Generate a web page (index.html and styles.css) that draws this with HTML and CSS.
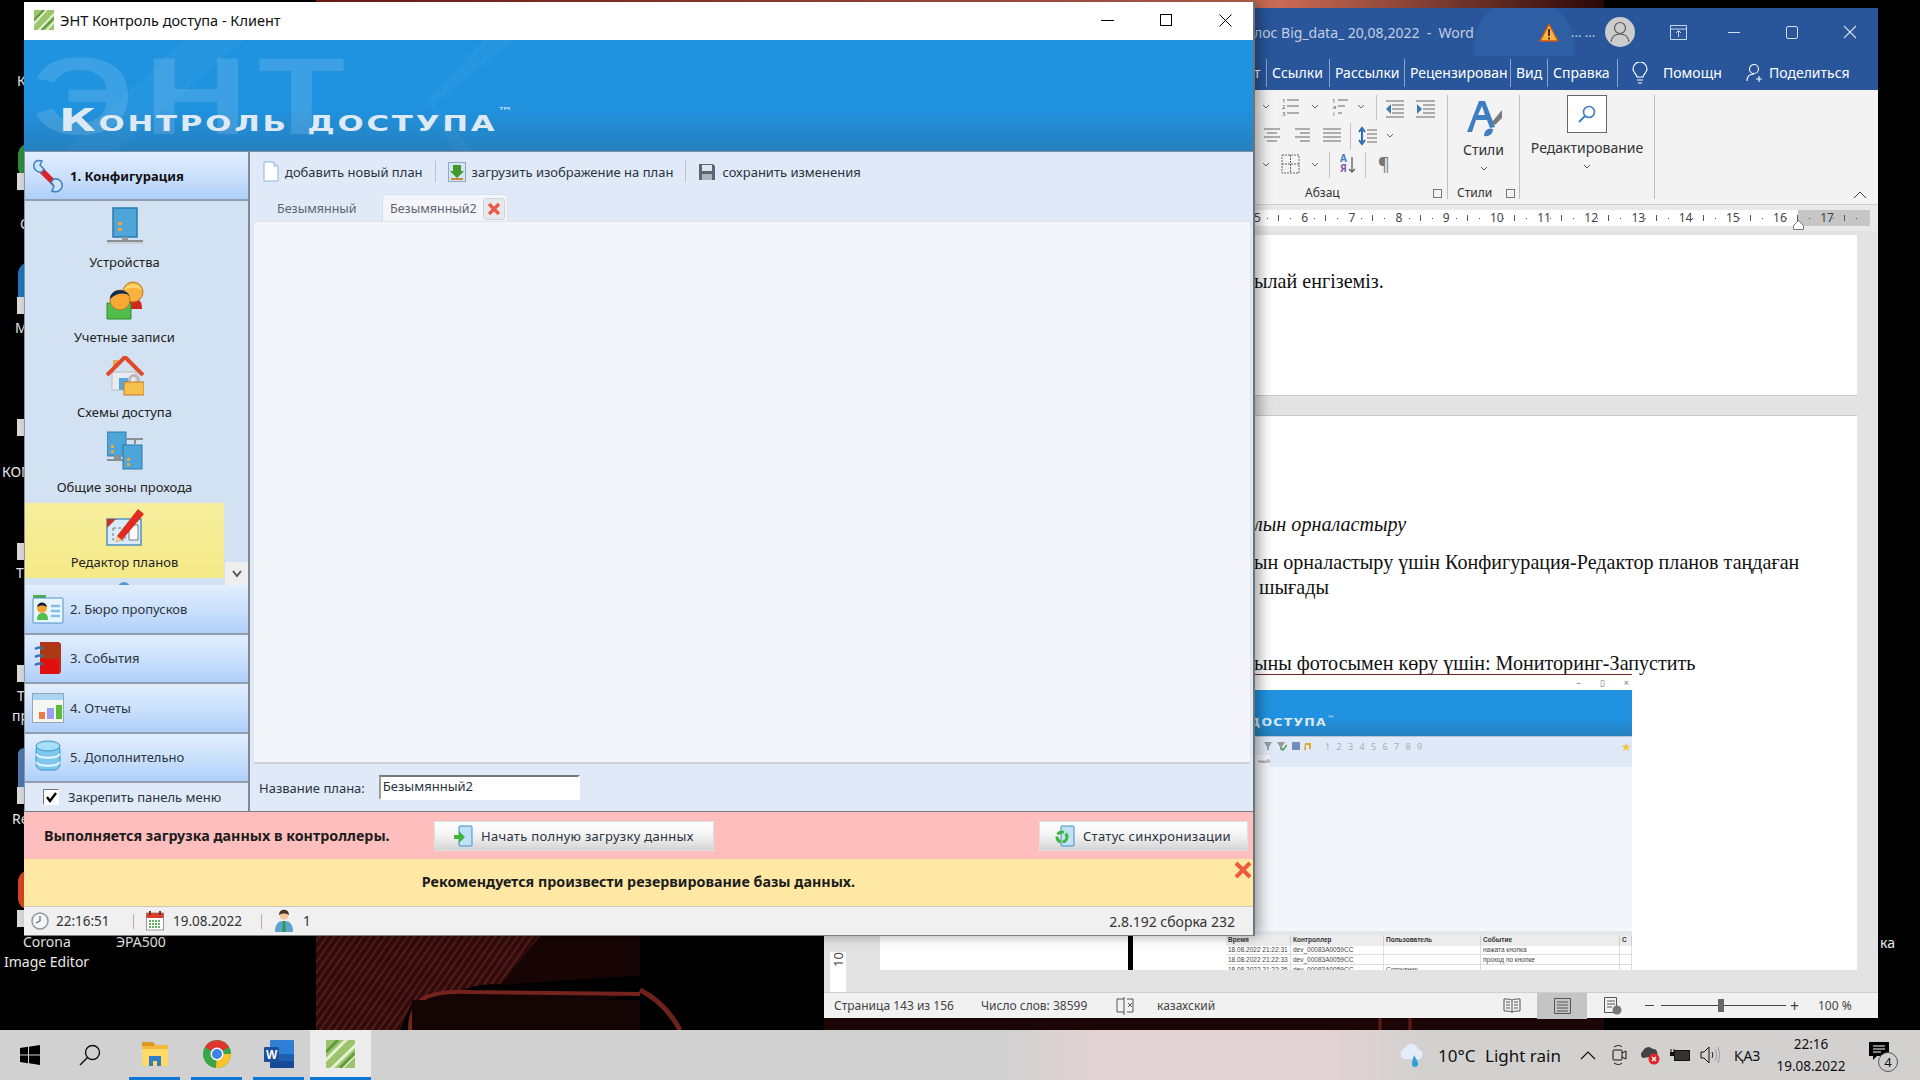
FILE: index.html
```html
<!DOCTYPE html>
<html lang="ru">
<head>
    <meta charset="UTF-8">
    <title>ЭНТ Контроль доступа - Клиент</title>
    <link rel="stylesheet" href="styles.css">
</head>
<body>
<div class="desktop">
    <!-- wallpaper -->
    <svg class="wallpaper" width="1920" height="1030" viewBox="0 0 1920 1030">
        <defs>
            <pattern id="hatch" width="6" height="6" patternUnits="userSpaceOnUse" patternTransform="rotate(35)">
                <rect width="6" height="6" fill="#2e0c0c"/>
                <rect width="2" height="6" fill="#571a18"/>
            </pattern>
            <linearGradient id="topred" x1="0" x2="1">
                <stop offset="0" stop-color="#7d1f18"/>
                <stop offset=".75" stop-color="#c96a55"/>
                <stop offset="1" stop-color="#2a0808"/>
            </linearGradient>
        </defs>
        <rect width="1920" height="1030" fill="#000"/>
        <rect x="316" y="0" width="1288" height="8" fill="url(#topred)"/>
        <polygon points="316,936 640,936 640,975 480,985 412,1003 400,1030 316,1030" fill="url(#hatch)"/>
        <polygon points="540,936 640,936 640,975 500,985" fill="#170505"/>
        <path d="M410 1030 C410 1000 425 990 470 992 L640 994" fill="#140404" stroke="#74231d" stroke-width="4"/>
        <rect x="412" y="1000" width="228" height="30" fill="#140404"/>
        <path d="M640 990 C660 1000 672 1015 680 1030" fill="none" stroke="#6e221c" stroke-width="5"/>
        <rect x="824" y="1018" width="780" height="12" fill="#1c0505"/>
        <path d="M1380 1018v12M1410 1018v12" stroke="#5e1b17" stroke-width="3"/>
    </svg>

    <!-- desktop icons peeking out from behind the windows -->
    <div class="dlabel" style="left:17px;top:71px">К</div>
    <div class="blob blob-green" style="top:143px;height:36px"></div>
    <div class="shortcut" style="top:173px"></div>
    <div class="dlabel" style="left:20px;top:214px">С</div>
    <div class="blob blob-blue" style="top:262px;height:48px"></div>
    <div class="shortcut" style="top:297px"></div>
    <div class="dlabel" style="left:15px;top:318px">М</div>
    <div class="shortcut" style="top:419px"></div>
    <div class="dlabel" style="left:2px;top:462px">КОМ</div>
    <div class="shortcut" style="top:543px"></div>
    <div class="dlabel" style="left:16px;top:563px">Т</div>
    <div class="shortcut" style="top:665px"></div>
    <div class="dlabel" style="left:17px;top:686px">Т</div>
    <div class="dlabel" style="left:12px;top:706px">пр</div>
    <div class="blob blob-steel" style="top:748px;height:50px"></div>
    <div class="shortcut" style="top:787px"></div>
    <div class="dlabel" style="left:12px;top:809px">Re</div>
    <div class="blob blob-orange" style="top:870px;height:40px"></div>
    <div class="shortcut" style="top:910px"></div>
    <div class="dlabel" style="left:23px;top:932px">Corona</div>
    <div class="dlabel" style="left:4px;top:952px">Image Editor</div>
    <div class="dlabel" style="left:116px;top:932px">ЭРА500</div>
    <div class="dlabel" style="left:1880px;top:933px">ка</div>

    <!-- word window behind -->
    <div class="word">
        <div class="word-title">
            <span class="word-name">лос Big_data_ 20,08,2022&nbsp; -&nbsp; Word</span>
            <svg class="word-warn" width="20" height="19" viewBox="0 0 20 19"><path d="M10 1L19 18H1Z" fill="#f3b63f" stroke="#c8561c" stroke-width="1.4"/><path d="M10 6v7M10 14.5v2" stroke="#5a2a10" stroke-width="2"/></svg>
            <span class="word-dots">... ...</span>
            <span class="word-avatar">
                <svg width="30" height="30" viewBox="0 0 30 30"><circle cx="15" cy="11" r="5.5" fill="none" stroke="#555" stroke-width="1.2"/><path d="M6 25c1-7 5-8 9-8s8 1 9 8" fill="none" stroke="#555" stroke-width="1.2"/></svg>
            </span>
            <svg class="word-ctl" width="17" height="15" viewBox="0 0 17 15"><path d="M.5.5h16v14H.5zM.5 4h16M8.5 12V6M6 8l2.500-2.500L11 8" fill="none" stroke="#c9d6ea"/></svg>
            <span class="word-min"></span>
            <span class="word-max"></span>
            <svg class="word-close" width="14" height="14" viewBox="0 0 14 14"><path d="M1 1l12 12M13 1L1 13" stroke="#d5deee" stroke-width="1.100"/></svg>
        </div>
        <div class="word-tabs">
            <span class="wtab" style="width:12px">т</span>
            <span class="wtab wsep" style="width:63px">Ссылки</span>
            <span class="wtab wsep" style="width:75px">Рассылки</span>
            <span class="wtab wsep wclip" style="width:106px">Рецензирован</span>
            <span class="wtab wsep" style="width:37px">Вид</span>
            <span class="wtab wsep" style="width:70px">Справка</span>
            <span class="wtab wsep wbulb">
                <svg width="16" height="22" viewBox="0 0 16 22"><path d="M5 15c0-3-4-4-4-8a7 7 0 0 1 14 0c0 4-4 5-4 8zM5 18h6M6 21h4" fill="none" stroke="#fff" stroke-width="1.200"/></svg>
            </span>
            <span class="wtab whelp">Помощн</span>
            <svg class="wshare" width="18" height="20" viewBox="0 0 18 20"><circle cx="8" cy="6" r="4.500" fill="none" stroke="#fff" stroke-width="1.100"/><path d="M1 18c0-5 3-7 7-7M13 13v6M10 16h6" fill="none" stroke="#fff" stroke-width="1.100"/></svg>
            <span class="wtab">Поделиться</span>
        </div>
        <div class="ribbon">
            <div class="rgroup rg-para">
                <svg class="para-icons" width="194" height="84" viewBox="0 0 194 84">
                    <g fill="none" stroke="#666">
                        <!-- chevrons -->
                        <path d="M9 8l3 3 3-3M58 8l3 3 3-3M104 8l3 3 3-3M133 37l3 3 3-3M9 66l3 3 3-3M58 66l3 3 3-3"/>
                        <!-- lists -->
                        <path d="M33 3h12M33 9h12M33 16h12M84 3h10M84 9h7M84 16h4"/>
                        <!-- alignment -->
                        <path d="M10 32h16M13 36h10M10 40h16M13 44h10M41 32h15M46 36h10M41 40h15M46 44h10M69 32h18M69 36h18M69 40h18M69 44h18"/>
                        <path d="M113 33h10M113 37h10M113 41h10M113 45h10"/>
                        <!-- borders -->
                        <path d="M28 58h17v18H28zM36.500 58v18M28 67h17" stroke-dasharray="2 1"/>
                    </g>
                    <g stroke="#c4c4c4">
                        <path d="M122.500-2v25M96.500 26v27M75.500 55v26M111.500 55v26"/>
                    </g>
                    <text x="28" y="6" class="list-num">1</text><text x="28" y="12" class="list-num">2</text><text x="28" y="19" class="list-num">3</text>
                    <text x="78" y="6" class="list-num">1</text><text x="79" y="12" class="list-num">a</text><text x="79" y="19" class="list-num">i</text>
                    <path d="M132 4h18M138 8h12M138 12h12M138 16h12M132 20h18" stroke="#666" fill="none"/>
                    <path d="M137 7l-5 5 5 5z" fill="#3d78b8"/>
                    <path d="M162 4h19M169 8h12M169 12h12M169 16h12M162 20h19" stroke="#666" fill="none"/>
                    <path d="M163 7l5 5-5 5z" fill="#3d78b8"/>
                    <path d="M105 35l3-4 3 4M108 31v16M105 43l3 4 3-4" fill="none" stroke="#2f6fb5" stroke-width="2"/>
                    <text x="86" y="65" class="az-a">А</text>
                    <text x="86" y="75" class="az-b">Я</text>
                    <path d="M98 60v15M95 72l3 3 3-3" fill="none" stroke="#666" stroke-width="1.400"/>
                    <text x="124" y="74" class="pilcrow">¶</text>
                </svg>
                <div class="rlabel rlabel-para">Абзац</div>
                <span class="launcher launcher-a"></span>
            </div>
            <div class="rgroup rg-styles">
                <svg class="styles-icon" width="40" height="38" viewBox="0 0 40 38">
                    <path d="M3 32L15 1h6l10 26-5 1-3-8H12l-4 12zM14 15h7l-3-9z" fill="#3f7fc1"/>
                    <path d="M28 22L38 10v8l-7 7z" fill="#7a7a7a"/>
                    <path d="M20 36c0-6 5-9 9-7 0 5-4 8-9 7z" fill="#3f7fc1"/>
                </svg>
                <div class="rbig">Стили</div>
                <svg class="chev" width="8" height="5" viewBox="0 0 8 5"><path d="M1 1l3 3 3-3" fill="none" stroke="#555"/></svg>
                <div class="rlabel">Стили</div>
                <span class="launcher launcher-b"></span>
            </div>
            <div class="rgroup rg-edit">
                <div class="search-box">
                    <svg width="20" height="20" viewBox="0 0 20 20"><circle cx="12" cy="8" r="5.500" fill="none" stroke="#3f7fc1" stroke-width="1.600"/><path d="M8 12l-6 6" stroke="#3f7fc1" stroke-width="2"/></svg>
                </div>
                <div class="rbig">Редактирование</div>
                <svg class="chev" width="8" height="5" viewBox="0 0 8 5"><path d="M1 1l3 3 3-3" fill="none" stroke="#555"/></svg>
            </div>
            <svg class="collapse" width="14" height="8" viewBox="0 0 14 8"><path d="M1 7l6-6 6 6" fill="none" stroke="#444"/></svg>
        </div>
        <div class="ruler-wrap">
            <div class="ruler">
                <span>5</span><span>6</span><span>7</span><span>8</span><span>9</span><span>10</span><span>11</span><span>12</span><span>13</span><span>14</span><span>15</span><span>16</span><span>17</span>
            </div>
            <svg class="ruler-mark" width="11" height="10" viewBox="0 0 11 10"><path d="M5.500.5l5 5v4H.5v-4z" fill="#fff" stroke="#777"/></svg>
        </div>
        <div class="doc">
            <div class="vruler">10</div>
            <div class="page page-one">
                <p class="dl">ылай енгіземіз.</p>
            </div>
            <div class="page page-two">
                <p class="dl dl-it"><i>лын орналастыру</i></p>
                <p class="dl dl-a">ын орналастыру үшін Конфигурация-Редактор планов таңдаған</p>
                <p class="dl dl-b">&nbsp;шығады</p>
                <p class="dl dl-c">ыны фотосымен көру үшін: Мониторинг-Запустить</p>
            </div>
            <!-- screenshot pasted in the document -->
            <div class="shot">
                <div class="shot-title"><span>–</span><span>▯</span><span>×</span></div>
                <div class="shot-banner"><span class="shot-logo">доступа<sup>™</sup></span></div>
                <div class="shot-tools">
                    <svg width="24" height="10" viewBox="0 0 24 10"><path d="M1 1h8L6 6v3H4V6zM14 1h8l-3 5v3h-2V6z" fill="#9a9a9a"/><path d="M18 7l2 2 4-5" fill="none" stroke="#43a047" stroke-width="1.500"/></svg>
                    <svg width="22" height="10" viewBox="0 0 22 10"><rect x="1" y="1" width="8" height="8" fill="#6d8fb8"/><path d="M14 2h6v6h-2V4h-3v5h-2z" fill="#e0a92e"/></svg>
                    <span class="shot-nums">1 2 3 4 5 6 7 8 9</span>
                    <span class="shot-star">★</span>
                </div>
                <div class="shot-tabs"><span>ный</span></div>
                <div class="shot-page"></div>
                <div class="shot-grip"></div>
                <div class="shot-table">
                    <b>Время</b><b>Контроллер</b><b>Пользователь</b><b>Событие</b><b>С</b>
                    <span>18.08.2022 21:22:31</span><span>dev_00083A0059CC</span><span></span><span>нажата кнопка</span><span></span>
                    <span>18.08.2022 21:22:33</span><span>dev_00083A0059CC</span><span></span><span>проход по кнопке</span><span></span>
                    <span>18.08.2022 21:22:35</span><span>dev_00083A0059CC</span><span>Сотрудник</span><span></span><span></span>
                </div>
            </div>
        </div>
        <div class="word-status">
            <span class="ws-a">Страница 143 из 156</span>
            <span class="ws-b">Число слов: 38599</span>
            <svg class="ws-i" width="18" height="18" viewBox="0 0 18 18"><path d="M8 2H1v13h7M8 0v18M11 2h6v13h-6M12 6l4 4M16 6l-4 4" fill="none" stroke="#555"/></svg>
            <span class="ws-c">казахский</span>
            <svg class="ws-read" width="18" height="16" viewBox="0 0 18 16"><path d="M9 2C7 1 4 1 1 1v12c3 0 6 0 8 1 2-1 5-1 8-1V1c-3 0-6 0-8 1zM9 2v13M3 4h4M3 7h4M3 10h4M11 4h4M11 7h4M11 10h4" fill="none" stroke="#555"/></svg>
            <span class="ws-print"><svg width="17" height="16" viewBox="0 0 17 16"><path d="M.5.5h16v15H.5zM3 4h11M3 7h11M3 10h11M3 13h11" fill="none" stroke="#555"/></svg></span>
            <svg class="ws-web" width="18" height="18" viewBox="0 0 18 18"><path d="M.5.5h12v15H.5zM3 4h8M3 7h8M3 10h5" fill="none" stroke="#555"/><circle cx="13" cy="13" r="4.500" fill="#777"/></svg>
            <span class="ws-minus"></span>
            <span class="ws-slider"><i></i></span>
            <span class="ws-plus">+</span>
            <span class="ws-zoom">100 %</span>
        </div>
    </div>

    <!-- access control client -->
    <div class="app">
        <div class="app-title">
            <svg width="20" height="20" viewBox="0 0 20 20"><rect width="20" height="20" fill="#9cc46c"/><path d="M-2 16L14-2M3 22L22 2M9 24L24 8" stroke="#e6f0d4" stroke-width="2"/><path d="M0 10L10 0M8 20L20 8" stroke="#5f9a3c" stroke-width="2"/></svg>
            <span class="app-name">ЭНТ Контроль доступа - Клиент</span>
            <span class="btn-min"></span>
            <span class="btn-max"></span>
            <svg class="btn-close" width="13" height="13" viewBox="0 0 13 13"><path d="M.5.5l12 12M12.500.5l-12 12" stroke="#000"/></svg>
        </div>
        <div class="banner">
            <svg class="banner-lines" width="1230" height="112" viewBox="0 0 1230 112"><path d="M40 112L160 0h60L90 112zM404 60L460 0h30L410 64L450 112H430z" fill="#fff" opacity=".03"/></svg>
            <span class="banner-mark">ЭНТ</span>
            <span class="banner-logo">Контроль доступа<sup>™</sup></span>
        </div>
        <div class="app-body">
            <div class="side">
                <div class="sec sec-open">
                    <svg width="32" height="34" viewBox="0 0 32 34">
                        <path d="M9 11l14 14" stroke="#d9222a" stroke-width="6"/>
                        <path d="M2 5c-1 5 3 9 8 8l2-3-4-4 2-4C6 1 3 2 2 5z" fill="#cfe3f7" stroke="#3b80bf" stroke-width="1.500"/>
                        <path d="M30 28c1-5-3-9-8-8l-3 3 3 4-2 5c4 2 9 0 10-4z" fill="#cfe3f7" stroke="#3b80bf" stroke-width="1.500"/>
                    </svg>
                    <b>1. Конфигурация</b>
                </div>
                <div class="side-list">
                    <div class="nav-item">
                        <svg width="36" height="38" viewBox="0 0 36 38">
                            <rect x="6" y="1" width="24" height="29" fill="#4ea5d8" stroke="#2a7ab0" stroke-width="1.500"/>
                            <rect x="11" y="15" width="4" height="3" fill="#f0a83a"/><rect x="11" y="21" width="4" height="3" fill="#f0a83a"/>
                            <path d="M15 30h6v3h-6z" fill="#999"/><path d="M0 34h36" stroke="#8a8f92" stroke-width="2"/><path d="M0 36h36" stroke="#c6c9cb" stroke-width="1.500"/>
                        </svg>
                        <span>Устройства</span>
                    </div>
                    <div class="nav-item">
                        <svg width="38" height="40" viewBox="0 0 38 40">
                            <path d="M18 28c1-9 5-10 10-10s8 2 8 10z" fill="#d2261a"/>
                            <circle cx="27" cy="11" r="10" fill="#f8b33e" stroke="#b87a28"/>
                            <path d="M18 9c2-6 13-9 18 0-6-3-12-3-18 0z" fill="#ffd66a"/>
                            <path d="M1 22h24v16H1z" fill="#4fbe4a" stroke="#2e8a2c"/>
                            <circle cx="14" cy="19" r="10" fill="#f8a835" stroke="#b87a28"/>
                            <path d="M4 18c0-10 15-12 20-3-6-4-13-3-20 3z" fill="#102a52"/>
                        </svg>
                        <span>Учетные записи</span>
                    </div>
                    <div class="nav-item">
                        <svg width="38" height="40" viewBox="0 0 38 40">
                            <path d="M7 4h5v8H7z" fill="#e3a65a"/>
                            <path d="M6 16h24v18H6z" fill="#e9edf2" stroke="#bbb"/>
                            <path d="M13 22h9v12h-9z" fill="#59a7dd"/>
                            <path d="M1 19L19 1l18 18" fill="none" stroke="#e2492a" stroke-width="4"/>
                            <path d="M22 24a6 6 0 0 1 12 0v3h-3v-3a3 3 0 0 0-6 0v3h-3z" fill="#b9b9b9"/>
                            <rect x="18" y="26" width="20" height="13" fill="#f7c04a" stroke="#c9762a"/>
                        </svg>
                        <span>Схемы доступа</span>
                    </div>
                    <div class="nav-item">
                        <svg width="36" height="38" viewBox="0 0 36 38">
                            <rect x="0" y="0" width="19" height="24" fill="#4ea5d8" stroke="#2a7ab0"/>
                            <rect x="4" y="13" width="3" height="3" fill="#f0a83a"/><rect x="4" y="18" width="3" height="3" fill="#f0a83a"/>
                            <path d="M8 24h5v3H8zM0 28h20" stroke="#8a8f92" stroke-width="2" fill="#999"/>
                            <path d="M19 7h17M28 7v5" stroke="#8a8f92" stroke-width="2"/>
                            <rect x="16" y="13" width="19" height="24" fill="#4ea5d8" stroke="#2a7ab0"/>
                            <rect x="20" y="26" width="3" height="3" fill="#f0a83a"/><rect x="20" y="31" width="3" height="3" fill="#f0a83a"/>
                        </svg>
                        <span>Общие зоны прохода</span>
                    </div>
                    <div class="nav-item nav-active">
                        <svg width="38" height="40" viewBox="0 0 38 40">
                            <path d="M1 13h34v26H1z" fill="#d8ecfb" stroke="#4f93c4" stroke-width="1.500"/>
                            <path d="M1 22l9-9H1z" fill="#c9341e"/>
                            <path d="M7 22h12v12H7z" fill="none" stroke="#777" stroke-dasharray="3 2"/>
                            <path d="M23 19h9v15h-9z" fill="#fff" stroke="#777"/>
                            <path d="M11 30L32 3l6 5-22 26-6 2z" fill="#e02b20"/>
                            <path d="M9 36l2-6 5 4z" fill="#f2cf8a"/>
                        </svg>
                        <span>Редактор планов</span>
                    </div>
                    <div class="nav-peek"></div>
                    <div class="scroll-down"><svg width="10" height="8" viewBox="0 0 10 8"><path d="M1 1l4 5 4-5" fill="none" stroke="#555" stroke-width="2"/></svg></div>
                </div>
                <div class="sec sec-thin">
                    <svg width="32" height="30" viewBox="0 0 32 30">
                        <path d="M1 1h13v6H1z" fill="#4fae48"/>
                        <rect x="1" y="4" width="30" height="25" rx="1" fill="#eaf4fc" stroke="#4a96c8"/>
                        <path d="M19 12h9M19 17h9M19 22h9" stroke="#7fc0ea" stroke-width="2.400"/>
                        <path d="M5 26c0-6 3-7 6-7s5 2 5 7z" fill="#4fbe4a"/>
                        <circle cx="10" cy="14" r="5" fill="#f3a435"/><path d="M5 13c1-6 9-6 10 0-3-2-7-2-10 0z" fill="#111d3a"/>
                    </svg>
                    <span>2. Бюро пропусков</span>
                </div>
                <div class="sec sec-thin">
                    <svg width="30" height="34" viewBox="0 0 30 34">
                        <path d="M7 1h19l2 2v28l-2 2H7z" fill="#b7321c"/>
                        <path d="M7 4h19v29H7z" fill="#e01010"/><path d="M7 4h19v14H7z" fill="#ab3a12"/>
                        <path d="M2 8c3-2 7-2 8 0M2 16c3-2 7-2 8 0M2 24c3-2 7-2 8 0" fill="none" stroke="#3274a8" stroke-width="2.400"/>
                    </svg>
                    <span>3. События</span>
                </div>
                <div class="sec sec-thin">
                    <svg width="32" height="30" viewBox="0 0 32 30">
                        <rect x=".5" y=".5" width="31" height="29" fill="#f4f7ed" stroke="#94a7b5"/>
                        <rect x="1" y="1" width="30" height="6" fill="#a9d7f3"/>
                        <rect x="7" y="19" width="6" height="7" fill="#f07a4a"/><rect x="15" y="15" width="7" height="11" fill="#9b9ff0"/><rect x="24" y="12" width="6" height="14" fill="#58bd38"/>
                    </svg>
                    <span>4. Отчеты</span>
                </div>
                <div class="sec sec-thin">
                    <svg width="26" height="34" viewBox="0 0 26 34">
                        <rect x="1" y="4" width="24" height="26" rx="6" fill="#7cc8ee" stroke="#3d92c8"/>
                        <ellipse cx="13" cy="6" rx="12" ry="5" fill="#a7ddf5" stroke="#3d92c8"/>
                        <path d="M1 14c3 5 21 5 24 0M1 22c3 5 21 5 24 0" fill="none" stroke="#e7f6fd" stroke-width="2"/>
                    </svg>
                    <span>5. Дополнительно</span>
                </div>
                <label class="pin">
                    <span class="check"><svg width="13" height="12" viewBox="0 0 13 12"><path d="M2 6l3 4 6-8" fill="none" stroke="#000" stroke-width="2.400"/></svg></span>
                    Закрепить панель меню
                </label>
            </div>
            <div class="main">
                <div class="toolbar">
                    <svg width="16" height="21" viewBox="0 0 16 21"><path d="M1 1h10l4 4v15H1z" fill="#fff" stroke="#8fb6dc"/><path d="M11 1v4h4" fill="#dce9f6" stroke="#8fb6dc"/></svg>
                    <span class="tool-text">добавить новый план</span>
                    <i class="tool-sep"></i>
                    <svg width="18" height="20" viewBox="0 0 18 20"><rect x=".5" y=".5" width="17" height="19" fill="#d2e4f5" stroke="#8fa9c3"/><path d="M5 3h8v6h3l-7 7-7-7h3z" fill="#3f9a2e"/><rect x="3" y="16" width="12" height="2" fill="#c98b2e"/></svg>
                    <span class="tool-text">загрузить изображение на план</span>
                    <i class="tool-sep"></i>
                    <svg width="18" height="18" viewBox="0 0 18 18"><path d="M1 1h14l2 2v14H1z" fill="#5d6670"/><rect x="4" y="2" width="10" height="6" fill="#dfe6ee"/><rect x="4" y="11" width="10" height="6" fill="#aab3bd"/></svg>
                    <span class="tool-text">сохранить изменения</span>
                </div>
                <div class="tabs">
                    <span class="tab">Безымянный</span>
                    <span class="tab tab-on">
                        Безымянный2
                        <span class="tab-x"><svg width="14" height="14" viewBox="0 0 14 14"><path d="M2 2l10 10M12 2L2 12" stroke="#ee5b45" stroke-width="3.400"/></svg></span>
                    </span>
                </div>
                <div class="tab-page"></div>
                <div class="plan-row">
                    <span>Название плана:</span>
                    <input class="plan-input" value="Безымянный2" readonly>
                </div>
            </div>
        </div>
        <div class="alert-sync">
            <b>Выполняется загрузка данных в контроллеры.</b>
            <button class="sync-btn btn-full">
                <svg width="20" height="22" viewBox="0 0 20 22"><rect x="6" y="1" width="13" height="20" rx="1" fill="#bfe2f6" stroke="#3d8fc8"/><path d="M1 10h5V6l6 6-6 6v-4H1z" fill="#3fb53a"/></svg>
                Начать полную загрузку данных
            </button>
            <button class="sync-btn btn-status">
                <svg width="20" height="22" viewBox="0 0 20 22"><rect x="6" y="1" width="13" height="20" rx="1" fill="#bfe2f6" stroke="#3d8fc8"/><circle cx="7" cy="12" r="5" fill="none" stroke="#3fb53a" stroke-width="3" stroke-dasharray="7 2"/></svg>
                Статус синхронизации
            </button>
        </div>
        <div class="alert-backup">
            <b>Рекомендуется произвести резервирование базы данных.</b>
            <svg class="backup-x" width="18" height="18" viewBox="0 0 18 18"><path d="M2 2l14 14M16 2L2 16" stroke="#ee5b3c" stroke-width="4"/></svg>
        </div>
        <div class="statusbar">
            <svg width="18" height="18" viewBox="0 0 18 18"><circle cx="9" cy="9" r="8" fill="#f5f5f5" stroke="#8b98a5" stroke-width="1.500"/><path d="M9 4v5l-4 2" fill="none" stroke="#5b6874" stroke-width="1.200"/></svg>
            <span class="st-time">22:16:51</span>
            <i class="st-sep"></i>
            <svg width="18" height="20" viewBox="0 0 18 20"><rect x=".5" y="2" width="17" height="17" fill="#fff" stroke="#999"/><rect x=".5" y="2" width="17" height="5" fill="#d9402c"/><path d="M4 0v4M14 0v4" stroke="#7a3024" stroke-width="2"/><path d="M3 10h12M3 13h12M3 16h12" stroke="#62b26a" stroke-width="2" stroke-dasharray="2 1"/></svg>
            <span class="st-date">19.08.2022</span>
            <i class="st-sep"></i>
            <svg width="20" height="24" viewBox="0 0 20 24"><path d="M1 23c0-9 4-11 9-11s9 2 9 11z" fill="#5ea3cc"/><path d="M9 12h2l1 11H8z" fill="#2f9a57"/><circle cx="10" cy="6" r="4.500" fill="#f2c79a"/><path d="M5 6c0-7 10-7 10 0-3-2-7-2-10 0z" fill="#4a3320"/></svg>
            <span class="st-count">1</span>
            <span class="st-ver">2.8.192 сборка 232</span>
        </div>
    </div>

    <!-- taskbar -->
    <div class="taskbar">
        <span class="tb-start">
            <svg width="20" height="20" viewBox="0 0 20 20"><path d="M0 3l8-1.200V9.500H0zM9 1.700L20 0v9.500H9zM0 10.500h8v7.700L0 17zM9 10.500h11V20L9 18.300z" fill="#000"/></svg>
        </span>
        <span class="tb-search">
            <svg width="22" height="22" viewBox="0 0 22 22"><circle cx="13.500" cy="8.500" r="7" fill="none" stroke="#111" stroke-width="1.400"/><path d="M8.500 13.500L1 21" stroke="#111" stroke-width="1.500"/></svg>
        </span>
        <span class="tb-app tb-files">
            <svg width="28" height="26" viewBox="0 0 28 26"><path d="M1 1h11l3 3h12v21H1z" fill="#f4b83d"/><path d="M1 1h11l2 4H1z" fill="#d99a1f"/><path d="M1 8h26v17H1z" fill="#ffd966"/><path d="M8 25V15h12v10h-4v-5h-4v5z" fill="#2f7dc4"/></svg>
        </span>
        <span class="tb-app tb-chrome">
            <svg width="28" height="28" viewBox="0 0 28 28"><circle cx="14" cy="14" r="14" fill="#3ba54a"/><path d="M14 14L2 7A14 14 0 0 1 26 7z" fill="#e0342c"/><path d="M14 14h14a14 14 0 0 1-15 14z" fill="#fbc42a"/><circle cx="14" cy="14" r="6.500" fill="#fff"/><circle cx="14" cy="14" r="5" fill="#3f82e6"/></svg>
        </span>
        <span class="tb-app tb-word">
            <svg width="30" height="28" viewBox="0 0 30 28"><rect x="6" y="0" width="24" height="28" rx="1" fill="#2f7fd6"/><rect x="6" y="14" width="24" height="7" fill="#1f5fb0"/><rect x="6" y="21" width="24" height="7" fill="#174a94"/><rect x="0" y="7" width="15" height="15" rx="1" fill="#1c4f9c"/><text x="2" y="19" class="w-letter">W</text></svg>
        </span>
        <span class="tb-app tb-ent">
            <svg width="29" height="28" viewBox="0 0 29 28"><rect width="29" height="28" fill="#9cc46c"/><path d="M-2 22L22-2M4 30L31 4M12 32L34 10" stroke="#e6f0d4" stroke-width="3"/><path d="M0 12L12 0M14 28L29 13" stroke="#5f9a3c" stroke-width="3"/></svg>
        </span>
        <div class="tray">
            <svg class="tr-weather" width="28" height="25" viewBox="0 0 28 25"><path d="M6 16a6 6 0 0 1 1-11 7 7 0 0 1 13 1 5.500 5.500 0 0 1 2 10z" fill="#e3eefa"/><path d="M16 12c2 4 4 6 4 9a3 3 0 0 1-6 0c0-3 1-5 2-9z" fill="#2f9ed8"/></svg>
            <span class="tr-temp">10°C</span>
            <span class="tr-rain">Light rain</span>
            <svg class="tr-up" width="16" height="9" viewBox="0 0 16 9"><path d="M1 8l7-7 7 7" fill="none" stroke="#111" stroke-width="1.200"/></svg>
            <svg class="tr-cam" width="15" height="20" viewBox="0 0 15 20"><rect x="1" y="5" width="9" height="10" rx="1" fill="none" stroke="#111"/><path d="M10 8l4-2v8l-4-2M2 2c3-2 6-2 8 0M2 18c3 2 6 2 8 0" fill="none" stroke="#111"/></svg>
            <svg class="tr-cloud" width="21" height="20" viewBox="0 0 21 20"><path d="M4 13a4 4 0 0 1 0-7 6 6 0 0 1 10-2 4 4 0 0 1 3 7z" fill="#444"/><circle cx="15" cy="14" r="5.500" fill="#e2242c"/><path d="M13 12l4 4M17 12l-4 4" stroke="#fff" stroke-width="1.400"/></svg>
            <svg class="tr-bat" width="20" height="14" viewBox="0 0 20 14"><path d="M1 4V1M4 4V1" stroke="#111"/><rect x="0" y="4" width="4" height="4" fill="#111"/><rect x="4.500" y="2.500" width="15" height="10" fill="#333" stroke="#111"/></svg>
            <svg class="tr-vol" width="20" height="18" viewBox="0 0 20 18"><path d="M1 6h3l5-5v16l-5-5H1z" fill="none" stroke="#111"/><path d="M12 6c1 2 1 4 0 6" fill="none" stroke="#111"/><path d="M15 3c2 4 2 8 0 12M18 1c2 5 2 11 0 16" fill="none" stroke="#999"/></svg>
            <span class="tr-lang">ҚАЗ</span>
            <span class="tr-clock"><span>22:16</span><span>19.08.2022</span></span>
            <span class="tr-note">
                <svg width="20" height="18" viewBox="0 0 20 18"><path d="M0 0h20v14h-12l-4 4v-4H0z" fill="#000"/><path d="M4 4h12M4 7h12M4 10h8" stroke="#fff"/></svg>
                <span class="tr-badge">4</span>
            </span>
        </div>
    </div>
</div>
</body>
</html>
```

FILE: styles.css
```css
* {
    box-sizing: border-box;
}

html, body {
    margin: 0;
    height: 100%;
    overflow: hidden;
    background: #000;
}

body {
    font-family: "Noto Sans", "Open Sans", sans-serif;
    font-size: 13px;
    color: #1c2630;
}

.desktop {
    position: relative;
    width: 1920px;
    height: 1080px;
    overflow: hidden;
}

.wallpaper {
    position: absolute;
    left: 0;
    top: 0;
}

/* desktop bits */
.dlabel {
    position: absolute;
    color: #e8e8e8;
    font-size: 14px;
    line-height: 20px;
    white-space: nowrap;
}

.shortcut {
    position: absolute;
    left: 17px;
    width: 8px;
    height: 17px;
    background: #dcdcdc;
}

.blob {
    position: absolute;
    left: 18px;
    width: 12px;
    border-radius: 12px 0 0 12px;
}

.blob-green { background: #2f8f3a; }
.blob-blue { background: #1d78bd; }
.blob-steel { background: #4f79b3; border-radius: 6px 0 0 0; }
.blob-orange { background: #d8481e; }

/* word */
.word {
    position: absolute;
    left: 824px;
    top: 8px;
    width: 1054px;
    height: 1010px;
    display: flex;
    flex-direction: column;
    background: #e3e3e3;
}

.word-title {
    height: 48px;
    flex-shrink: 0;
    display: flex;
    align-items: center;
    padding-left: 430px;
    color: #c3cfe2;
    font-size: 14px;
    background: radial-gradient(circle at 700px 40px, #2e5fa5 0 50px, transparent 51px), #29559a;
}

.word-name {
    width: 285px;
    white-space: nowrap;
    overflow: hidden;
}

.word-warn { margin-right: 12px; }

.word-dots {
    width: 34px;
    font-size: 13px;
}

.word-avatar {
    width: 30px;
    height: 30px;
    border-radius: 50%;
    background: #ccc;
    margin-right: 35px;
}

.word-ctl { margin-right: 41px; }

.word-min {
    width: 12px;
    height: 1px;
    background: #d5deee;
    margin-right: 46px;
}

.word-max {
    width: 12px;
    height: 13px;
    border: 1px solid #d5deee;
    border-radius: 2px;
    margin-right: 45px;
}

.word-tabs {
    height: 34px;
    flex-shrink: 0;
    display: flex;
    align-items: center;
    padding-left: 430px;
    color: #fff;
    font-size: 14px;
    background: #29559a;
}

.wtab {
    line-height: 28px;
    white-space: nowrap;
    flex-shrink: 0;
}

.wsep {
    border-left: 1px solid #8ba5cc;
    padding-left: 5px;
}

.wclip { overflow: hidden; }

.wbulb {
    width: 46px;
    padding-left: 14px;
    display: flex;
    align-items: center;
    height: 28px;
}

.whelp {
    width: 83px;
}

.wshare { margin-right: 5px; }

.ribbon {
    height: 115px;
    flex-shrink: 0;
    position: relative;
    display: flex;
    padding-left: 430px;
    background: #f3f3f3;
    border-bottom: 1px solid #d0d0d0;
    font-size: 14px;
    color: #333;
}

.rgroup {
    position: relative;
    margin-top: 5px;
    height: 104px;
    border-right: 1px solid #bfbfbf;
    display: flex;
    flex-direction: column;
    align-items: center;
}

.rg-para {
    width: 194px;
    align-items: flex-start;
}

.para-icons {
    margin-top: 2px;
    overflow: visible;
}

.list-num {
    font-size: 6px;
    fill: #555;
}

.az-a {
    font-size: 10px;
    font-weight: 700;
    fill: #3f7fc1;
}

.az-b {
    font-size: 10px;
    font-weight: 700;
    fill: #8652a8;
}

.pilcrow {
    font-size: 18px;
    fill: #777;
}

.rlabel {
    position: absolute;
    bottom: -2px;
    left: 9px;
    font-size: 12px;
    line-height: 16px;
}

.rlabel-para { left: 51px; }

.launcher {
    position: absolute;
    bottom: 1px;
    width: 9px;
    height: 9px;
    border: 1px solid #777;
}

.launcher-a { right: 5px; }
.launcher-b { right: 4px; }

.rg-styles {
    width: 72px;
}

.styles-icon { margin-top: 5px; }

.rbig {
    line-height: 20px;
    margin-top: 5px;
    white-space: nowrap;
}

.rg-styles .rbig { margin-top: 2px; }

.chev { margin-top: 6px; }

.rg-edit {
    width: 135px;
}

.search-box {
    width: 40px;
    height: 38px;
    border: 1px solid #666;
    background: #fff;
    display: flex;
    align-items: center;
    justify-content: center;
}

.collapse {
    position: absolute;
    right: 11px;
    bottom: 5px;
}

.ruler-wrap {
    position: relative;
    height: 26px;
    flex-shrink: 0;
    padding: 5px 8px 5px 430px;
    background: #e9e9e9;
}

.ruler {
    height: 16px;
    display: flex;
    overflow: hidden;
    background: linear-gradient(90deg, #fff 544px, #c6c6c6 544px);
    font-size: 12px;
    line-height: 16px;
    color: #444;
}

.ruler span {
    width: 47.200px;
    flex-shrink: 0;
    white-space: nowrap;
    background:
        linear-gradient(#555, #555) 13px 8px / 1px 1px no-repeat,
        linear-gradient(#555, #555) 24px 5px / 1px 6px no-repeat,
        linear-gradient(#555, #555) 36px 8px / 1px 1px no-repeat;
}

.ruler-mark {
    position: absolute;
    left: 969px;
    top: 15px;
}

.doc {
    flex: 1;
    position: relative;
    overflow: hidden;
    padding: 4px 21px 22px 56px;
    display: flex;
    flex-direction: column;
}

.vruler {
    position: absolute;
    left: 6px;
    bottom: 0;
    width: 16px;
    height: 40px;
    background: #fff;
    writing-mode: vertical-rl;
    transform: rotate(180deg);
    font-size: 13px;
    line-height: 16px;
    color: #444;
    text-align: right;
}

.page {
    background: #fff;
    padding-left: 374px;
    font-family: "Liberation Serif", serif;
    font-size: 20.100px;
    color: #111;
    border-bottom: 1px solid #c9c9c9;
    flex-shrink: 0;
}

.page-one {
    height: 161px;
    padding-top: 34px;
}

.page-two {
    flex: 1;
    margin-top: 19px;
    padding-top: 96px;
    border-top: 1px solid #c9c9c9;
    border-bottom: 0;
}

.dl {
    margin: 0;
    line-height: 24px;
    white-space: nowrap;
}

.dl-a { margin-top: 14px; }
.dl-b { margin-top: 1px; }
.dl-c { margin-top: 52px; }

/* pasted screenshot */
.shot {
    position: absolute;
    left: 304px;
    top: 443px;
    width: 504px;
    height: 296px;
    border-top: 1px solid #6b2a22;
    border-left: 5px solid #000;
    background: #fff;
    display: flex;
    flex-direction: column;
    overflow: hidden;
}

.shot-title {
    height: 15px;
    flex-shrink: 0;
    display: flex;
    justify-content: flex-end;
    gap: 19px;
    padding-right: 3px;
    font-size: 9px;
    line-height: 15px;
    color: #777;
}

.shot-banner {
    height: 46px;
    flex-shrink: 0;
    background: linear-gradient(#2192e0 60%, #2680bf);
    padding: 22px 0 0 116px;
}

.shot-logo {
    display: inline-block;
    color: #dbe9f5;
    font: 700 14px/18px "DejaVu Sans", sans-serif;
    font-variant: small-caps;
    letter-spacing: 1px;
    transform: scaleX(1.25);
    transform-origin: left;
}

.shot-logo sup {
    font-size: 6px;
    line-height: 0;
}

.shot-tools {
    height: 19px;
    flex-shrink: 0;
    display: flex;
    align-items: center;
    gap: 4px;
    padding-left: 130px;
    background: #e0e9f8;
    border-top: 1px solid #b9c5d6;
}

.shot-nums {
    margin-left: 8px;
    word-spacing: 4px;
    font-size: 9px;
    color: #a9adb3;
}

.shot-star {
    margin-left: auto;
    color: #f0c53a;
    font-size: 12px;
}

.shot-tabs {
    height: 12px;
    flex-shrink: 0;
    padding-left: 121px;
    background: #e0e9f8;
    font-size: 6px;
    line-height: 12px;
    color: #777;
}

.shot-tabs span {
    display: inline-block;
    width: 16px;
    background: #f3f5fa;
    text-align: right;
}

.shot-page {
    flex: 1;
    background: #f3f5fa;
    margin-left: 93px;
}

.shot-grip {
    height: 4px;
    margin-left: 93px;
    background: #e4e6ea;
    flex-shrink: 0;
}

.shot-table {
    height: 35px;
    flex-shrink: 0;
    margin-left: 93px;
    display: grid;
    grid-template-columns: 65px 93px 97px 139px 12px;
    grid-auto-rows: 10px;
    font-family: "Liberation Sans", sans-serif;
    font-size: 6.500px;
    line-height: 10px;
    color: #444;
    background: #fff;
}

.shot-table b {
    height: 11px;
    background: #ececec;
    color: #333;
    border-right: 1px solid #ccc;
    padding-left: 2px;
}

.shot-table span {
    border-right: 1px solid #ddd;
    border-bottom: 1px solid #ddd;
    padding-left: 2px;
    white-space: nowrap;
    overflow: hidden;
}

.word-status {
    height: 26px;
    flex-shrink: 0;
    display: flex;
    align-items: center;
    background: #f1f1f1;
    border-top: 1px solid #cfcfcf;
    font-size: 12px;
    color: #444;
    padding-left: 10px;
}

.ws-a { width: 147px; }
.ws-b { width: 135px; }
.ws-i { margin-right: 23px; }
.ws-c { width: 346px; }

.ws-read { margin-right: 16px; }

.ws-print {
    width: 50px;
    height: 26px;
    background: #c4c4c4;
    display: flex;
    align-items: center;
    justify-content: center;
    margin-right: 17px;
}

.ws-web { margin-right: 23px; }

.ws-minus {
    width: 9px;
    height: 1px;
    background: #444;
    margin-right: 7px;
}

.ws-slider {
    position: relative;
    width: 125px;
    height: 1px;
    background: #444;
    margin-right: 4px;
}

.ws-slider i {
    position: absolute;
    left: 57px;
    top: -6px;
    width: 6px;
    height: 13px;
    background: #666;
}

.ws-plus {
    font-size: 16px;
    width: 28px;
}

.ws-zoom { white-space: nowrap; }

/* ent client */
.app {
    position: absolute;
    left: 24px;
    top: 2px;
    width: 1231px;
    height: 934px;
    display: flex;
    flex-direction: column;
    background: #e0e9f8;
    border-right: 2px solid #6f7478;
    border-bottom: 1px solid #808080;
    box-shadow: 5px 0 12px rgba(0, 0, 0, 0.35);
}

.app-title {
    height: 38px;
    flex-shrink: 0;
    display: flex;
    align-items: center;
    padding: 0 0 2px 10px;
    background: #fff;
}

.app-name {
    margin-left: 6px;
    width: 1041px;
    font-size: 14.500px;
    color: #111;
    white-space: nowrap;
}

.btn-min {
    width: 13px;
    height: 1px;
    background: #000;
    margin-right: 46px;
}

.btn-max {
    width: 12px;
    height: 12px;
    border: 1px solid #000;
    margin-right: 47px;
}

.banner {
    position: relative;
    height: 112px;
    flex-shrink: 0;
    overflow: hidden;
    background: linear-gradient(#2093e0 60%, #2680bf);
    border-bottom: 1px solid #7f8fa0;
}

.banner-lines {
    position: absolute;
    left: 0;
    top: 0;
}

.banner-mark {
    position: absolute;
    left: 8px;
    top: -9px;
    font: 700 110px/130px "Liberation Sans", sans-serif;
    letter-spacing: 8px;
    color: rgba(255, 255, 255, 0.13);
    transform: scaleX(1.3);
    transform-origin: left;
}

.banner-logo {
    position: absolute;
    left: 35px;
    top: 58px;
    font: 700 32px/44px "DejaVu Sans", sans-serif;
    font-variant: small-caps;
    letter-spacing: 2px;
    color: #dde9f4;
    white-space: nowrap;
    transform: scaleX(1.4);
    transform-origin: left;
}

.banner-logo sup {
    font-size: 11px;
    font-weight: 400;
    vertical-align: 16px;
    line-height: 0;
    letter-spacing: 0;
}

.app-body {
    flex: 1;
    min-height: 0;
    display: flex;
}

.side {
    width: 226px;
    flex-shrink: 0;
    display: flex;
    flex-direction: column;
    border-right: 2px solid #7f8a94;
    border-left: 1px solid #8c97a3;
}

.sec {
    height: 49px;
    flex-shrink: 0;
    display: flex;
    align-items: center;
    gap: 5px;
    padding-left: 6px;
    background: linear-gradient(#e2eeff, #c9dffb 55%, #aecffa);
    border-bottom: 2px solid #929eae;
    color: #2a3440;
}

.sec svg {
    width: 34px;
}

.sec-thin {
    height: 49.500px;
}

.sec-open {
    color: #111;
}

.side-list {
    position: relative;
    height: 384px;
    flex-shrink: 0;
    overflow: hidden;
    padding-top: 2px;
    background: #d3e2f2;
}

.nav-item {
    width: 199px;
    height: 75px;
    display: flex;
    flex-direction: column;
    align-items: center;
    padding-top: 3px;
    color: #222;
}

.nav-item svg {
    height: 40px;
}

.nav-item span {
    margin-top: 7px;
    line-height: 18px;
    white-space: nowrap;
}

.nav-active {
    background: linear-gradient(#f7ee9e, #f5ea88);
}

.nav-peek {
    width: 12px;
    height: 12px;
    margin: 4px 0 0 93px;
    border-radius: 50%;
    background: #4f9ccc;
}

.scroll-down {
    position: absolute;
    right: 0;
    bottom: 0;
    width: 23px;
    height: 23px;
    background: #eeeeee;
    display: flex;
    align-items: center;
    justify-content: center;
}

.pin {
    flex: 1;
    display: flex;
    align-items: center;
    gap: 9px;
    padding-left: 18px;
    background: #e0e9f8;
    color: #2a3440;
    white-space: nowrap;
}

.check {
    width: 16px;
    height: 16px;
    background: #fff;
    border: 1px solid #777;
    border-right-color: #fff;
    border-bottom-color: #fff;
    display: flex;
    align-items: center;
    justify-content: center;
}

.main {
    flex: 1;
    min-width: 0;
    display: flex;
    flex-direction: column;
    padding: 0 2px 0 3px;
}

.toolbar {
    height: 41px;
    flex-shrink: 0;
    display: flex;
    align-items: center;
    padding: 0 0 2px 10px;
    color: #2a3440;
}

.tool-text {
    margin-left: 6px;
    white-space: nowrap;
}

.tool-sep {
    width: 1px;
    height: 21px;
    background: #b8c2cf;
    margin: 0 12px;
}

.tabs {
    height: 28px;
    flex-shrink: 0;
    display: flex;
    align-items: flex-end;
    padding-left: 24px;
    font-size: 12.500px;
    color: #5d6670;
}

.tab {
    height: 24px;
    line-height: 24px;
    width: 105px;
}

.tab-on {
    width: 126px;
    height: 28px;
    margin-bottom: -1px;
    display: flex;
    align-items: center;
    padding-left: 7px;
    background: #f3f5fa;
    border: 1px solid #d9e0ea;
    border-bottom: 0;
    border-radius: 4px 4px 0 0;
}

.tab-x {
    width: 22px;
    height: 22px;
    margin-left: 6px;
    background: #e7e9ee;
    border: 1px solid #cfd4dc;
    border-radius: 3px;
    display: flex;
    align-items: center;
    justify-content: center;
}

.tab-page {
    flex: 1;
    background: #f3f5fa;
    border-radius: 3px;
    border: 1px solid #dfe3ea;
    border-bottom: 2px solid #cdd2da;
}

.plan-row {
    height: 47px;
    flex-shrink: 0;
    display: flex;
    align-items: center;
    padding-left: 6px;
    color: #2a3440;
}

.plan-input {
    width: 201px;
    height: 25px;
    margin-left: 14px;
    padding: 0 2px 3px;
    border: 2px solid #fff;
    border-top-color: #777;
    border-left-color: #9a9a9a;
    background: #fff;
    font: 13px "Noto Sans", sans-serif;
    color: #2a3440;
}

.alert-sync {
    height: 48px;
    flex-shrink: 0;
    display: flex;
    align-items: center;
    padding-left: 20px;
    background: #ffbebe;
    border-top: 1px solid #7a8088;
    color: #1c1c1c;
}

.alert-sync b, .alert-backup b {
    font-size: 14.300px;
    white-space: nowrap;
}

.alert-sync b {
    width: 390px;
    flex-shrink: 0;
}

.sync-btn {
    height: 30px;
    display: flex;
    align-items: center;
    gap: 8px;
    border: 1px solid #dde0e0;
    background: linear-gradient(#fff, #f2f2f2 50%, #d4d4d4);
    font: 13px "Noto Sans", sans-serif;
    color: #2a3440;
    letter-spacing: 0.3px;
    flex-shrink: 0;
}

.btn-full {
    width: 280px;
    padding-left: 18px;
}

.btn-status {
    width: 209px;
    margin-left: 325px;
    padding-left: 15px;
}

.alert-backup {
    position: relative;
    height: 48px;
    flex-shrink: 0;
    display: flex;
    align-items: center;
    justify-content: center;
    padding-bottom: 2px;
    background: #ffe8a4;
    border-bottom: 1px solid #c9c9c0;
    color: #1c1c1c;
}

.backup-x {
    position: absolute;
    right: 1px;
    top: 2px;
}

.statusbar {
    height: 28px;
    flex-shrink: 0;
    display: flex;
    align-items: center;
    padding-left: 7px;
    background: #f0f0f0;
    font-size: 13.500px;
    color: #333;
}

.st-time {
    width: 77px;
    margin-left: 7px;
    white-space: nowrap;
}

.st-date {
    width: 88px;
    margin-left: 9px;
    white-space: nowrap;
}

.st-sep {
    width: 1px;
    height: 15px;
    background: #b9a9a9;
    margin-right: 12px;
}

.st-count {
    margin-left: 9px;
}

.st-ver {
    margin-left: auto;
    margin-right: 18px;
    white-space: nowrap;
    font-size: 14px;
}

/* taskbar */
.taskbar {
    position: absolute;
    left: 0;
    bottom: 0;
    width: 1920px;
    height: 50px;
    display: flex;
    align-items: center;
    background: linear-gradient(90deg, #d2d1d1 0 1010px, #e3d3d4 1100px 1330px, #d3d1d0 1420px);
    color: #111;
}

.tb-start, .tb-search {
    width: 60px;
    height: 50px;
    display: flex;
    align-items: center;
    justify-content: center;
    flex-shrink: 0;
}

.tb-app {
    width: 51px;
    height: 50px;
    margin-left: 11px;
    display: flex;
    align-items: center;
    justify-content: center;
    border-bottom: 3px solid #0f78d4;
    flex-shrink: 0;
}

.tb-files { margin-left: 9px; }

.tb-ent {
    width: 61px;
    margin-left: 6px;
    background: #ececec;
}

.tray {
    margin-left: auto;
    width: 522px;
    height: 50px;
    display: flex;
    align-items: center;
    font-size: 17px;
    white-space: nowrap;
}

.tr-temp { margin-left: 12px; width: 47px; }
.tr-rain { width: 95px; }
.tr-up { margin-right: 16px; }
.tr-cam { margin-right: 12px; }
.tr-cloud { margin-right: 10px; }
.tr-bat { margin-right: 10px; }
.tr-vol { margin-right: 14px; }

.tr-lang {
    width: 42px;
    font-size: 14px;
}

.tr-clock {
    width: 70px;
    display: flex;
    flex-direction: column;
    align-items: center;
    gap: 6px;
    font-size: 13.500px;
    line-height: 16px;
}

.tr-note {
    position: relative;
    margin-left: 23px;
    width: 30px;
    height: 34px;
    padding-top: 4px;
}

.tr-badge {
    position: absolute;
    left: 9px;
    top: 14px;
    width: 20px;
    height: 20px;
    border: 1px solid #555;
    border-radius: 50%;
    background: #cfcfcf;
    font-size: 13px;
    line-height: 18px;
    text-align: center;
}

.w-letter {
    font: 700 12px "Liberation Sans", sans-serif;
    fill: #fff;
}
```
